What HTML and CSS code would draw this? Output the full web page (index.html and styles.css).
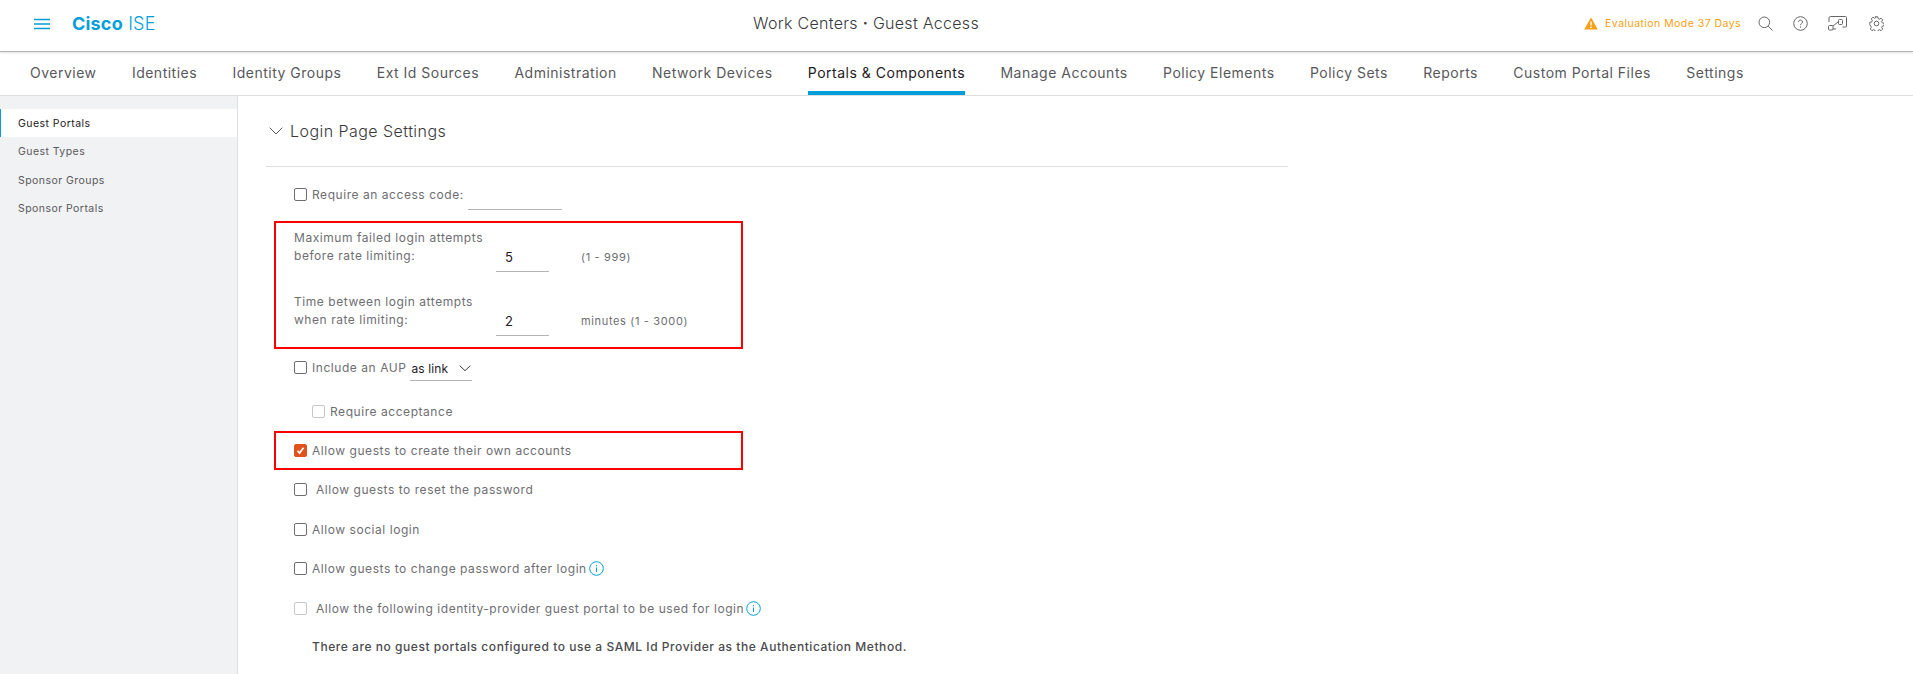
FILE: index.html
```html
<!DOCTYPE html>
<html lang="en">
<head>
<meta charset="utf-8">
<title>Cisco ISE</title>
<link rel="stylesheet" href="styles.css">
</head>
<body>
<header class="topbar">
  <div class="brand">
    <svg class="burger" width="18" height="12" viewBox="0 0 18 12"><path d="M1 1.500h16M1 6h16M1 10.500h16" stroke="#049fd9" stroke-width="1.300" fill="none"/></svg>
    <span class="logo"><b>Cisco</b> ISE</span>
  </div>
  <div class="page-title">Work Centers <b class="dot">·</b> Guest Access</div>
  <div class="tools">
    <svg class="warn" width="14" height="13" viewBox="0 0 14 13"><path d="M7 .5 13.800 12.500H.2Z" fill="#fb9f14"/><path d="M7 4.500v4M7 9.500v1.500" stroke="#fff" stroke-width="1.400"/></svg>
    <span class="eval">Evaluation Mode 37 Days</span>
    <svg class="tool search" width="15" height="15" viewBox="0 0 15 15"><circle cx="6.300" cy="6.300" r="5.300" stroke="#666" fill="none"/><path d="m10.200 10.200 4.300 4.300" stroke="#666" fill="none"/></svg>
    <svg class="tool help" width="15" height="15" viewBox="0 0 15 15"><circle cx="7.500" cy="7.500" r="6.800" stroke="#666" fill="none"/><path d="M5.500 6c0-2.600 4-2.600 4 0 0 1.600-2 1.500-2 3.300M7.500 10.500v1.200" stroke="#666" fill="none"/></svg>
    <svg class="tool flow" width="19" height="15" viewBox="0 0 19 15"><path d="M1 6V2a1.500 1.500 0 0 1 1.500-1.500h15A1 1 0 0 1 18.500 2v8a1 1 0 0 1-1 1h-3M5 13h3" stroke="#666" fill="none"/><rect x=".5" y="9.500" width="4.500" height="4.500" rx="1" stroke="#666" fill="none"/><rect x="10.500" y="3.500" width="4" height="5" rx="1" stroke="#666" fill="none"/><path d="m5 10 5-4" stroke="#666" fill="none"/></svg>
    <svg class="tool gear" width="15" height="15" viewBox="0 0 15 15"><path d="M6.300.7h2.400l.4 1.900 1.300.6 1.700-1 1.600 1.700-1 1.600.6 1.400 1.900.4v2.400l-1.900.4-.6 1.300 1 1.700-1.600 1.600-1.700-1-1.300.6-.4 1.900H6.300l-.4-1.900-1.300-.6-1.700 1-1.600-1.600 1-1.700-.6-1.300L.8 8.700V6.300l1.900-.4.6-1.400-1-1.600 1.600-1.700 1.700 1 1.300-.6Z" stroke="#666" fill="none" stroke-linejoin="round"/><circle cx="7.500" cy="7.500" r="2.300" stroke="#666" fill="none"/></svg>
  </div>
</header>
<nav class="tabs">
  <a class="tab">Overview</a>
  <a class="tab">Identities</a>
  <a class="tab">Identity Groups</a>
  <a class="tab">Ext Id Sources</a>
  <a class="tab">Administration</a>
  <a class="tab">Network Devices</a>
  <a class="tab active">Portals &amp; Components</a>
  <a class="tab">Manage Accounts</a>
  <a class="tab">Policy Elements</a>
  <a class="tab">Policy Sets</a>
  <a class="tab">Reports</a>
  <a class="tab">Custom Portal Files</a>
  <a class="tab">Settings</a>
</nav>
<div class="body">
  <aside class="side">
    <a class="side-item current">Guest Portals</a>
    <a class="side-item">Guest Types</a>
    <a class="side-item">Sponsor Groups</a>
    <a class="side-item">Sponsor Portals</a>
  </aside>
  <main class="content">
    <div class="section-head">
      <svg width="14" height="8" viewBox="0 0 14 8"><path d="m.7.7 6.300 6.300L13.300.7" stroke="#58585b" fill="none"/></svg>
      <span>Login Page Settings</span>
    </div>
    <div class="form">
      <div class="row access"><span class="cb"></span><span class="lbl">Require an access code:</span><span class="field code"></span></div>
      <div class="callout limits">
        <div class="limit first">
          <div class="limit-lbl">Maximum failed login attempts<br>before rate limiting:</div>
          <span class="field num">5</span>
          <span class="hint">(1 - 999)</span>
        </div>
        <div class="limit">
          <div class="limit-lbl">Time between login attempts<br>when rate limiting:</div>
          <span class="field num">2</span>
          <span class="hint">minutes (1 - 3000)</span>
        </div>
      </div>
      <div class="row aup"><span class="cb"></span><span class="lbl">Include an AUP</span>
        <span class="select">as link<svg width="12" height="7" viewBox="0 0 12 7"><path d="m.7.7 5.300 5 5.300-5" stroke="#39393b" fill="none"/></svg></span>
      </div>
      <div class="row accept"><span class="cb off"></span><span class="lbl">Require acceptance</span></div>
      <div class="callout create">
        <span class="cb on"><svg width="13" height="13" viewBox="0 0 13 13"><path d="m3.500 6.800 2 2.300 4-5.300" stroke="#fff" stroke-width="1.700" fill="none"/></svg></span><span class="lbl">Allow guests to create their own accounts</span>
      </div>
      <div class="row opt"><span class="cb"></span><span class="lbl wide">Allow guests to reset the password</span></div>
      <div class="row opt"><span class="cb"></span><span class="lbl">Allow social login</span></div>
      <div class="row opt"><span class="cb"></span><span class="lbl">Allow guests to change password after login</span>
        <svg class="info" width="15" height="15" viewBox="0 0 15 15"><circle cx="7.500" cy="7.500" r="6.800" stroke="#049fd9" fill="none"/><path d="M7.500 6.500v4.500M7.500 4v1.300" stroke="#049fd9" fill="none"/></svg>
      </div>
      <div class="row opt"><span class="cb off"></span><span class="lbl wide">Allow the following identity-provider guest portal to be used for login</span>
        <svg class="info" width="15" height="15" viewBox="0 0 15 15"><circle cx="7.500" cy="7.500" r="6.800" stroke="#049fd9" fill="none"/><path d="M7.500 6.500v4.500M7.500 4v1.300" stroke="#049fd9" fill="none"/></svg>
      </div>
      <p class="note">There are no guest portals configured to use a SAML Id Provider as the Authentication Method.</p>
    </div>
  </main>
</div>
</body>
</html>
```
FILE: styles.css
```css
* { box-sizing: border-box; }
html, body { margin: 0; height: 100%; overflow: hidden; }
body { font-family: Inter, "Liberation Sans", sans-serif; background: #fff; color: #58585b; }

.topbar { height: 52px; display: flex; align-items: center; padding-bottom: 4px; border-bottom: 1px solid #b4b4b6; box-shadow: 0 1px 2px rgba(0,0,0,.12); position: relative; }
.brand { flex: 1; display: flex; align-items: center; padding-left: 33px; }
.burger { margin-right: 21px; }
.logo { font-size: 18px; line-height: 22px; color: #049fd9; font-weight: 300; letter-spacing: .2px; }
.logo b { font-weight: 700; }
.page-title { font-size: 16px; font-weight: 300; color: #39393b; letter-spacing: .3px; position: absolute; left: 753px; top: 13px; }
.dot { font-weight: 600; }
.tools { display: flex; align-items: center; margin-right: 29px; }
.warn { margin-right: 7px; }
.eval { font-size: 10.500px; color: #fb9f14; letter-spacing: .45px; margin-right: 17px; }
.tool { flex: none; }
.search { margin-right: 20px; }
.help { margin-right: 20px; }
.flow { margin-right: 22px; }

.tabs { height: 44px; display: flex; gap: 35.300px; padding-left: 30px; border-bottom: 1px solid #dfdfdf; }
.tab { font-size: 14px; line-height: 42px; height: 43px; letter-spacing: .5px; color: #58585b; }
.tab.active { color: #1f2023; border-bottom: 4px solid #049fd9; }

.body { display: flex; height: 578px; }
.side { width: 238px; background: #f1f2f3; border-right: 1px solid #dfdfdf; padding-top: 13px; flex: none; }
.side-item { display: block; height: 28.700px; line-height: 29px; padding-left: 18px; font-size: 10.500px; letter-spacing: .45px; color: #58585b; }
.side-item.current { background: #fff; color: #1f2023; border-left: 1px solid #049fd9; padding-left: 17px; height: 28px; }

.content { flex: 1; padding-left: 28px; }
.section-head { width: 1022px; height: 71px; border-bottom: 1px solid #dfdfdf; display: flex; align-items: center; gap: 7px; padding: 0 0 1px 3px; font-size: 16px; font-weight: 300; letter-spacing: .45px; color: #39393b; }

.form { font-size: 12px; letter-spacing: .55px; color: #6e6e72; }
.row { display: flex; align-items: center; padding-left: 28px; }
.cb { width: 13px; height: 13px; border: 1px solid #6e6e72; border-radius: 2px; flex: none; display: block; background: #fff; }
.cb.off { border-color: #c6c7ca; }
.cb.on { background: #e2521d; border-color: #e2521d; }
.cb.on svg { display: block; margin: -1px; }
.lbl { margin-left: 5px; white-space: nowrap; }
.lbl.wide { margin-left: 9px; }
.access { height: 44px; padding-top: 10px; }
.field { display: block; border-bottom: 1px solid #b4b4b6; color: #1f2023; }
.code { width: 94px; height: 20px; align-self: flex-end; margin: 0 0 1px 4px; }
.callout { border: 2px solid #f00; margin-left: 8px; }
.limits { width: 469px; height: 128px; margin-top: 10px; padding-left: 18px; display: flex; flex-direction: column; }
.limit { display: flex; align-items: flex-end; height: 43px; margin-top: 21px; flex: none; }
.limit.first { margin-top: 6px; }
.limit-lbl { width: 202px; line-height: 18px; margin-bottom: 7px; }
.num { width: 53px; height: 25px; padding-left: 9px; font-size: 13px; line-height: 21px; }
.hint { margin-left: 32px; font-size: 11px; letter-spacing: .65px; line-height: 14px; margin-bottom: 8px; }
.aup { height: 36px; }
.select { width: 62px; height: 24px; align-self: flex-start; margin: 8px 0 0 4px; border-bottom: 1px solid #b4b4b6; display: flex; align-items: center; justify-content: space-between; padding: 0 1px; font-size: 12px; letter-spacing: .1px; color: #1f2023; }
.accept { height: 40px; padding-left: 46px; margin-top: 6px; }
.create { width: 469px; height: 39px; padding-left: 18px; display: flex; align-items: center; }
.opt { height: 39.500px; }
.info { margin-left: 2px; }
.note { margin: 11px 0 0 46px; line-height: 16px; color: #4a4a4d; font-weight: 500; }
```
